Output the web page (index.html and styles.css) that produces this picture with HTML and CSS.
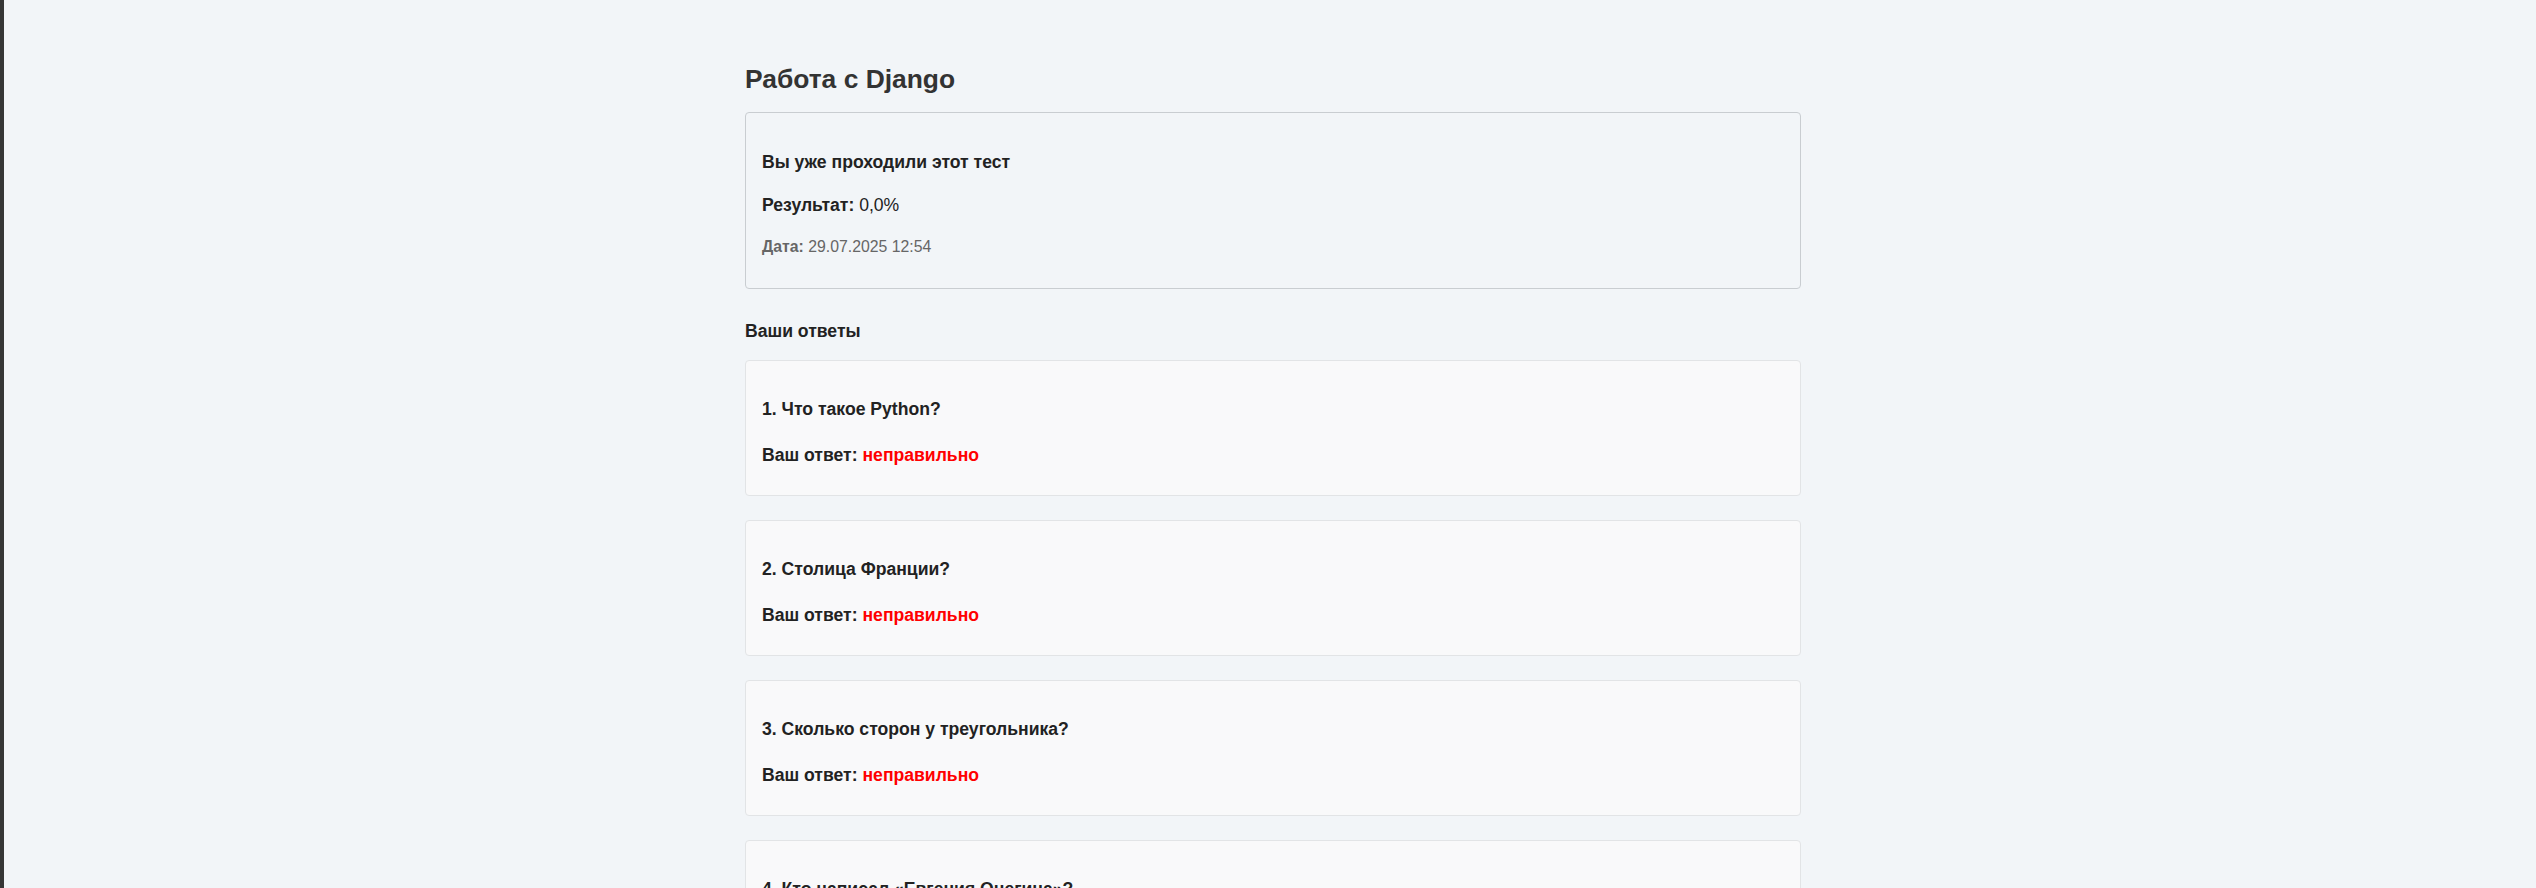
FILE: index.html
```html
<!DOCTYPE html>
<html lang="ru">
<head>
<meta charset="utf-8">
<title>Работа с Django</title>
<link rel="stylesheet" href="styles.css">
</head>
<body>
<div class="container">
  <h1 class="page-title">Работа с Django</h1>
  <div class="summary">
    <div class="summary-title">Вы уже проходили этот тест</div>
    <div class="summary-result"><b>Результат:</b> 0,0%</div>
    <div class="summary-date"><b>Дата:</b> 29.07.2025 12:54</div>
  </div>
  <h2 class="answers-title">Ваши ответы</h2>
  <div class="answers">
    <div class="answer-card">
      <div class="question">1. Что такое Python?</div>
      <div class="answer">Ваш ответ: <span class="wrong">неправильно</span></div>
    </div>
    <div class="answer-card">
      <div class="question">2. Столица Франции?</div>
      <div class="answer">Ваш ответ: <span class="wrong">неправильно</span></div>
    </div>
    <div class="answer-card">
      <div class="question">3. Сколько сторон у треугольника?</div>
      <div class="answer">Ваш ответ: <span class="wrong">неправильно</span></div>
    </div>
    <div class="answer-card">
      <div class="question">4. Кто написал «Евгения Онегина»?</div>
      <div class="answer">Ваш ответ: <span class="wrong">неправильно</span></div>
    </div>
  </div>
</div>
</body>
</html>
```

FILE: styles.css
```css
html, body {
  margin: 0;
  padding: 0;
}
body {
  background: #f2f5f8;
  border-left: 4px solid #363636;
  padding-left: 6px;
  min-height: 100vh;
  box-sizing: border-box;
  font-family: "Liberation Sans", Arial, sans-serif;
  color: #222;
}
.container {
  width: 1056px;
  margin: 0 auto;
  padding-top: 64px;
  padding-bottom: 40px;
}
.page-title {
  margin: 0 0 18px;
  font-size: 26.4px;
  line-height: 30px;
  font-weight: bold;
  color: #333;
}
.summary {
  border: 1px solid #c9cdd1;
  border-radius: 4px;
  padding: 38px 16px 31px;
  display: flex;
  flex-direction: column;
}
.summary-title {
  font-size: 17.6px;
  line-height: 22px;
  font-weight: bold;
  margin-bottom: 21px;
}
.summary-result {
  font-size: 17.6px;
  line-height: 22px;
  margin-bottom: 21px;
}
.summary-date {
  font-size: 15.8px;
  line-height: 20px;
  color: #666;
}
.answers-title {
  margin: 31px 0 18px;
  font-size: 17.6px;
  line-height: 22px;
  font-weight: bold;
  color: #222;
}
.answers {
  display: flex;
  flex-direction: column;
  gap: 24px;
}
.answer-card {
  background: #f9f9fa;
  border: 1px solid #e2e4e6;
  border-radius: 4px;
  padding: 37px 16px 29px;
  display: flex;
  flex-direction: column;
  gap: 24px;
}
.question,
.answer {
  font-size: 17.6px;
  line-height: 22px;
  font-weight: bold;
  color: #222;
}
.wrong {
  color: #ff0000;
}
```
